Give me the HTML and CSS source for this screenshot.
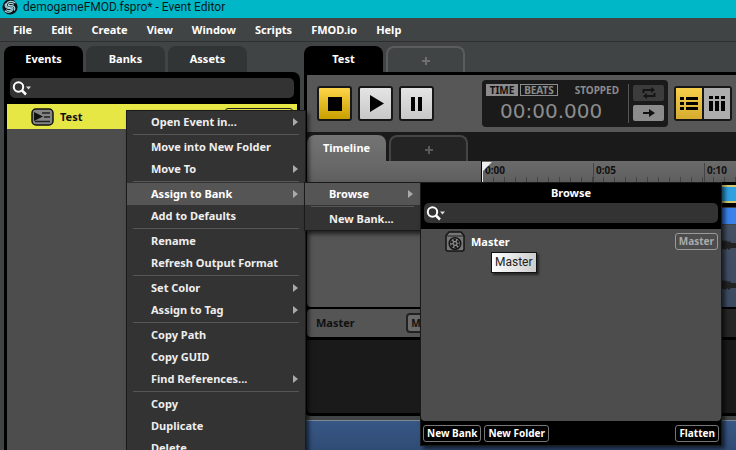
FILE: index.html
```html
<!DOCTYPE html>
<html lang="en">
<head>
<meta charset="utf-8">
<title>demogameFMOD.fspro* - Event Editor</title>
<link rel="stylesheet" href="styles.css">
</head>
<body>
<div class="app">
  <header class="titlebar">
    <svg class="logo" width="16" height="16" viewBox="0 0 16 16" aria-hidden="true">
      <circle cx="8" cy="8" r="7.6" fill="#091317"/>
      <g fill="none" stroke="#a9d5df" stroke-width="1.2">
        <path d="M13.5 4.2C10.500 1.200 5.500 2.200 4.400 5.300C3.600 7.800 6.300 8.700 8 8.200C10.200 7.500 11.500 8.800 10.800 10.500C9.800 13 5.500 14.500 2.700 11.800"/>
        <path d="M11.700 5.400C9.800 3.700 6.900 4.200 6.300 5.800C6 7 8 6.500 9.500 6.600C12.500 6.800 13.500 9 12.300 11.500"/>
        <path d="M4.300 10.600C6.200 12.300 9.100 11.800 9.500 10.200C9.800 9 8 9.600 6.500 9.500C3.300 9.200 2.500 7 3.600 4.500"/>
      </g>
    </svg>
    <span>demogameFMOD.fspro* - Event Editor</span>
  </header>
  <nav class="menubar">
    <button>File</button><button>Edit</button><button>Create</button><button>View</button><button>Window</button><button>Scripts</button><button>FMOD.io</button><button>Help</button>
  </nav>

  <main class="workspace">
    <section class="browser">
      <div class="tabs">
        <button class="tab tab-active">Events</button><button class="tab">Banks</button><button class="tab">Assets</button>
      </div>
      <div class="browser-body">
        <div class="search">
          <label for="event-search" aria-label="Search events">
            <svg width="20" height="16" viewBox="0 0 20 16"><circle cx="6.500" cy="7" r="4.700" fill="none" stroke="#fff" stroke-width="2"/><path d="M10 10.500L14 14.500" stroke="#fff" stroke-width="2.500"/><path d="M14 6.500h5l-2.500 3z" fill="#ddd"/></svg>
          </label>
          <input id="event-search" type="text">
        </div>
        <div class="event-list">
          <div class="event-row">
            <svg width="23" height="18" viewBox="0 0 23 18"><rect x="1" y="1" width="21" height="16" rx="4" fill="#858585" stroke="#111" stroke-width="1.500"/><path d="M3 4l9 4.500L3 13z" fill="#111"/><path d="M11 5h8M13 9h6M4 13.500h15" stroke="#222" stroke-width="1.500"/></svg>
            <span>Test</span>
            <span class="event-bank"></span>
          </div>
        </div>
      </div>
    </section>

    <section class="editor">
      <div class="tabs">
        <button class="tab tab-active">Test</button><button class="tab tab-add" aria-label="New tab"><svg width="8" height="8"><path d="M4 0v8M0 4h8" stroke="#6e7070" stroke-width="2"/></svg></button>
      </div>
      <div class="editor-body">
        <div class="transport">
          <div class="playback">
            <button class="key key-on" aria-label="Stop"><svg width="31" height="31"><path d="M9 9h14v14H9z"/></svg></button>
            <button class="key" aria-label="Play"><svg width="31" height="31"><path d="M10 7l14 8.500L10 24z"/></svg></button>
            <button class="key" aria-label="Pause"><svg width="31" height="31"><path d="M10 9h4v14h-4zM17 9h4v14h-4z"/></svg></button>
          </div>
          <div class="clock">
            <div class="clock-main">
              <div class="clock-top"><button class="mode mode-on">TIME</button><button class="mode">BEATS</button><span class="state">STOPPED</span></div>
              <div class="time">00:00.000</div>
            </div>
            <div class="clock-side">
              <button class="mini" aria-label="Loop"><svg width="14" height="12" viewBox="0 0 14 12"><path d="M1.500 6V3h8M12.500 6v3h-8" fill="none" stroke="#151515" stroke-width="2"/><path d="M9 0l4 3-4 3zM5 6L1 9l4 3z" fill="#151515"/></svg></button>
              <button class="mini mini-light" aria-label="Follow"><svg width="14" height="10" viewBox="0 0 14 10"><path d="M1 5h8" stroke="#111" stroke-width="2"/><path d="M7 1l6 4-6 4z" fill="#111"/></svg></button>
            </div>
          </div>
          <div class="views">
            <button class="view view-on" aria-label="Track view"><svg width="18" height="14"><path d="M0 0h4v3H0zM6 0h12v3H6zM0 5h4v3H0zM6 5h12v3H6zM0 10h4v3H0zM6 10h12v3H6z"/></svg></button>
            <button class="view" aria-label="Mixer view"><svg width="16" height="15"><path d="M0 0h4v3H0zM0 5h4v10H0zM6 0h4v3H6zM6 5h4v10H6zM12 0h4v3h-4zM12 5h4v10h-4z"/></svg></button>
          </div>
        </div>

        <div class="tabs sheet-tabs">
          <button class="tab tab-sheet">Timeline</button><button class="tab tab-add" aria-label="New sheet"><svg width="8" height="8"><path d="M4 0v8M0 4h8" stroke="#5a5a5a" stroke-width="2"/></svg></button>
        </div>

        <div class="ruler-row">
          <div class="ruler-head"></div>
          <div class="ruler">
            <svg class="cursor" width="10" height="21"><path d="M0 0h10L1 9v12H0z" fill="#eee"/></svg>
            <span>0:00</span><span>0:05</span><span>0:10</span>
          </div>
        </div>
        <div class="track-row">
          <div class="track-head"></div>
          <div class="lanes">
            <div class="lane-logic"></div>
            <div class="lane-clip"></div>
            <div class="lane-audio">
              <svg width="20" height="78" viewBox="0 0 20 78"><path id="wave" d="M0 17L4 18L6 16L8 15L9 17L10 15L12 17L14 16L15 18L20 18V23H15L13 25L11 23L10 25L8 24L6 24L4 22L0 23z" fill="#222"/><use href="#wave" y="40"/></svg>
            </div>
          </div>
        </div>
        <div class="master-row">
          <div class="master-head"><span>Master</span><button class="mute">M</button></div>
          <div class="master-lane"></div>
        </div>
        <div class="empty-lanes"></div>
      </div>
      <div class="deck"></div>
    </section>
  </main>
</div>

<div class="menu context-menu">
  <button class="item more">Open Event in...</button><hr>
  <button class="item">Move into New Folder</button>
  <button class="item more">Move To</button><hr>
  <button class="item more item-on">Assign to Bank</button>
  <button class="item">Add to Defaults</button><hr>
  <button class="item">Rename</button>
  <button class="item">Refresh Output Format</button><hr>
  <button class="item more">Set Color</button>
  <button class="item more">Assign to Tag</button><hr>
  <button class="item">Copy Path</button>
  <button class="item">Copy GUID</button>
  <button class="item more">Find References...</button><hr>
  <button class="item">Copy</button>
  <button class="item">Duplicate</button>
  <button class="item">Delete</button>
</div>

<div class="menu bank-menu">
  <button class="item more item-on">Browse</button><hr>
  <button class="item">New Bank...</button>
</div>

<section class="bank-popup">
  <h2>Browse</h2>
  <div class="search">
    <label for="bank-search" aria-label="Search banks">
      <svg width="20" height="16" viewBox="0 0 20 16"><circle cx="6.500" cy="7" r="4.700" fill="none" stroke="#fff" stroke-width="2"/><path d="M10 10.500L14 14.500" stroke="#fff" stroke-width="2.500"/><path d="M14 6.500h5l-2.500 3z" fill="#ddd"/></svg>
    </label>
    <input id="bank-search" type="text">
  </div>
  <div class="bank-list">
    <div class="bank-row">
      <svg width="20" height="21" viewBox="0 0 20 21"><path d="M1 4.500L4 1h12l3 3.500V18a2 2 0 0 1-2 2H3a2 2 0 0 1-2-2z" fill="#777" stroke="#151515" stroke-width="1.500"/><path d="M2 5h16" stroke="#222"/><circle cx="10" cy="12.500" r="5.800" fill="#888" stroke="#151515" stroke-width="1.500"/><circle cx="10" cy="12.500" r="3.700" fill="none" stroke="#1a1a1a" stroke-width="2.200" stroke-dasharray="2.400 1.475"/><circle cx="10" cy="12.500" r="1.200" fill="#222"/></svg>
      <span>Master</span>
      <span class="tag">Master</span>
    </div>
  </div>
  <footer>
    <button class="pill">New Bank</button><button class="pill">New Folder</button><button class="pill pill-end">Flatten</button>
  </footer>
</section>
<div class="tooltip">Master</div>
</body>
</html>
```
FILE: styles.css
```css
* { box-sizing: border-box; }

body {
  margin: 0;
  overflow: hidden;
  background: #414444;
  color: #fff;
  font: 700 11px/16px "Noto Sans", "Open Sans", sans-serif;
}

button {
  margin: 0;
  padding: 0;
  border: 0;
  background: none;
  color: inherit;
  font: inherit;
}

svg { display: block; flex: none; }

.app { display: flex; flex-direction: column; height: 100vh; }

.titlebar {
  display: flex;
  align-items: center;
  gap: 5px;
  height: 18px;
  padding: 0 2px 4px;
  background: #00b7c7;
  color: #08191c;
  font: 12px/14px Roboto, sans-serif;
}

.menubar {
  display: flex;
  gap: 19px;
  height: 24px;
  padding: 0 13px;
  border-bottom: 1px solid #2d3030;
}

.workspace { display: flex; flex: 1; gap: 4px; min-height: 0; padding: 4px 0 0 4px; }

.browser { display: flex; flex-direction: column; width: 296px; flex: none; }

.tabs { display: flex; gap: 3px; height: 26px; flex: none; }
.tab {
  width: 79px;
  border-radius: 8px 8px 0 0;
  background: #313535;
}
.tab-active { background: #000; }
.tab-add {
  display: flex;
  align-items: center;
  justify-content: center;
  padding-top: 2px;
  border: 2px solid #5b5d5d;
  border-bottom: 0;
  background: none;
}

.browser-body {
  display: flex;
  flex: 1;
  flex-direction: column;
  gap: 6px;
  padding: 6px 3px 0;
  border-radius: 0 7px 0 0;
  background: #000;
}

.search {
  display: flex;
  align-items: center;
  height: 20px;
  flex: none;
  margin: 0 3px;
  padding-left: 2px;
  border-radius: 5px;
  background: #333;
}
.search input {
  flex: 1;
  min-width: 0;
  border: 0;
  outline: 0;
  background: none;
  color: #fff;
  font: inherit;
}

.event-list { flex: 1; background: #4d4d4d; }
.event-row {
  display: flex;
  align-items: center;
  gap: 6px;
  height: 25px;
  padding-left: 24px;
  background: #e6e645;
  color: #111;
}
.event-bank {
  width: 68px;
  height: 17px;
  margin: 0 4px 0 auto;
  border: 1px solid #222;
  border-radius: 3px;
}

.editor { display: flex; flex: 1; flex-direction: column; min-width: 0; }
.editor-body {
  display: flex;
  flex: 1;
  flex-direction: column;
  padding: 3px 0 3px 3px;
  border-radius: 0 0 0 6px;
  background: #000;
}

.transport {
  display: flex;
  align-items: center;
  height: 57px;
  flex: none;
  padding: 0 4px 0 10px;
  background: #575757;
}
.playback { display: flex; gap: 6px; }
.key {
  width: 35px;
  height: 35px;
  border: 2px solid #171717;
  border-radius: 3px;
  background: linear-gradient(#e4e4e4, #c8c8c8);
}
.key-on { background: linear-gradient(#fdd548, #c9a000); }

.clock {
  display: flex;
  gap: 9px;
  width: 186px;
  height: 47px;
  margin-left: auto;
  padding: 4px;
  border-radius: 4px;
  background: #1a1a1a;
  color: #8c8c8c;
}
.clock-main { flex: 1; }
.clock-top { display: flex; gap: 2px; font-size: 10px; line-height: 10px; }
.mode { width: 38px; height: 12px; border: 1px solid #8c8c8c; }
.mode-on { width: 32px; background: #8c8c8c; color: #111; }
.state { margin-left: auto; line-height: 12px; }
.time { padding-left: 14px; font: 20px/30px "DejaVu Sans", sans-serif; white-space: nowrap; }
.clock-side {
  display: flex;
  flex-direction: column;
  gap: 4px;
  padding: 1px 0 0 4px;
  border-left: 1px solid #555;
}
.mini {
  display: flex;
  align-items: center;
  justify-content: center;
  width: 31px;
  height: 16px;
  border-radius: 2px;
  background: #3c3c3c;
}
.mini-light { background: #8c8c8c; }

.views {
  display: flex;
  gap: 2px;
  width: 58px;
  height: 35px;
  margin-left: 6px;
  padding: 2px;
  border-radius: 3px;
  background: #171717;
}
.view {
  display: flex;
  flex: 1;
  align-items: center;
  justify-content: center;
  background: #adadad;
}
.view-on { background: linear-gradient(#f8d04a, #d5ac30); }

.sheet-tabs { height: 29px; padding-top: 3px; background: #1a1a1a; }
.tab-sheet { background: linear-gradient(#747474, #696969); }
.sheet-tabs .tab-add { border-color: #454545; background: #242424; }

.ruler-row { display: flex; height: 21px; flex: none; background: linear-gradient(#6b6b6b, #5e5e5e); color: #111; }
.ruler-head { width: 175px; flex: none; border-right: 1px solid #000; }
.ruler {
  position: relative;
  display: flex;
  flex: 1;
  min-width: 0;
  overflow: hidden;
  background:
    repeating-linear-gradient(90deg, #444 0 1px, transparent 1px 111px) 0 2px / auto 19px no-repeat,
    repeating-linear-gradient(90deg, #444 0 1px, transparent 1px 11px) 0 16px / auto 5px no-repeat;
  font-size: 10px;
  line-height: 19px;
}
.ruler span { width: 111px; flex: none; padding-left: 3px; }
.cursor { position: absolute; top: 1px; left: 0; }

.track-row { display: flex; height: 125px; flex: none; gap: 3px; }
.track-head { width: 171px; flex: none; border-radius: 0 0 0 4px; background: #555; }
.lanes { display: flex; flex: 1; flex-direction: column; padding-top: 3px; }
.lane-logic { height: 18px; flex: none; border: solid #d3ca70; border-width: 2px 0; background: #2fa0e0; }
.lane-clip { height: 18px; flex: none; margin-top: 4px; border: solid #444; border-width: 1px 0; background: #3b82eb; }
.lane-audio { display: flex; flex: 1; justify-content: flex-end; background: linear-gradient(#445064, #3c4a60); }

.master-row { display: flex; height: 28px; flex: none; gap: 3px; margin-top: 2px; }
.master-head {
  display: flex;
  align-items: center;
  justify-content: space-between;
  width: 171px;
  flex: none;
  padding: 0 52px 0 9px;
  border-radius: 4px 0 0 4px;
  background: #555;
  color: #111;
}
.mute { width: 20px; height: 20px; border: 2px solid #222; border-radius: 4px; background: #6b6b6b; font-size: 10px; }
.master-lane { flex: 1; background: #262626; }
.empty-lanes { flex: 1; margin-top: 3px; border-radius: 0 0 0 4px; background: #1a1a1a; }

.deck {
  height: 30px;
  flex: none;
  margin-top: 4px;
  border-top: 1px solid #7d8795;
  background: linear-gradient(#385785, #304c75);
}

/* Floating menus */
.menu {
  position: absolute;
  border: 1px solid #1a1a1a;
  background: #333;
  color: #eee;
  box-shadow: 3px 3px 4px rgba(0, 0, 0, .6);
}
.context-menu { top: 110px; left: 126px; width: 180px; }
.bank-menu { top: 182px; left: 304px; width: 117px; }
.item {
  display: flex;
  align-items: center;
  justify-content: space-between;
  width: 100%;
  height: 22px;
  padding: 0 7px 0 24px;
  white-space: nowrap;
}
.item-on { background: #555; color: #fff; }
.more::after {
  content: "";
  border: solid transparent;
  border-width: 4px 0 4px 5px;
  border-left-color: #aaa;
}
hr { height: 1px; margin: 1px 6px; border: 0; background: #565656; }

.bank-popup {
  position: absolute;
  top: 182px;
  left: 420px;
  display: flex;
  flex-direction: column;
  width: 302px;
  height: 264px;
  border: 1px solid #1a1a1a;
  background: #000;
  box-shadow: 3px 3px 4px rgba(0, 0, 0, .6);
}
h2 { margin: 0; font: inherit; line-height: 20px; text-align: center; }
.bank-list { flex: 1; margin-top: 6px; border-radius: 0 0 4px 4px; background: #4d4d4d; }
.bank-row { display: flex; align-items: center; gap: 6px; height: 25px; padding: 0 3px 0 24px; }
.tag, .pill {
  padding: 0 3px;
  border: 1px solid #999;
  border-radius: 3px;
  font-size: 10px;
  line-height: 15px;
}
.tag { margin-left: auto; color: #aaa; }
footer { display: flex; align-items: center; gap: 3px; height: 24px; padding: 0 2px; }
.pill { border-color: #777; }
.pill-end { margin-left: auto; }

.tooltip {
  position: absolute;
  top: 252px;
  left: 491px;
  padding: 0 3px;
  border: 1px solid #111;
  background: linear-gradient(90deg, #fff, #ccc);
  box-shadow: 2px 2px 2px rgba(0, 0, 0, .5);
  color: #222;
  font: 12px/19px Roboto, sans-serif;
}
```
